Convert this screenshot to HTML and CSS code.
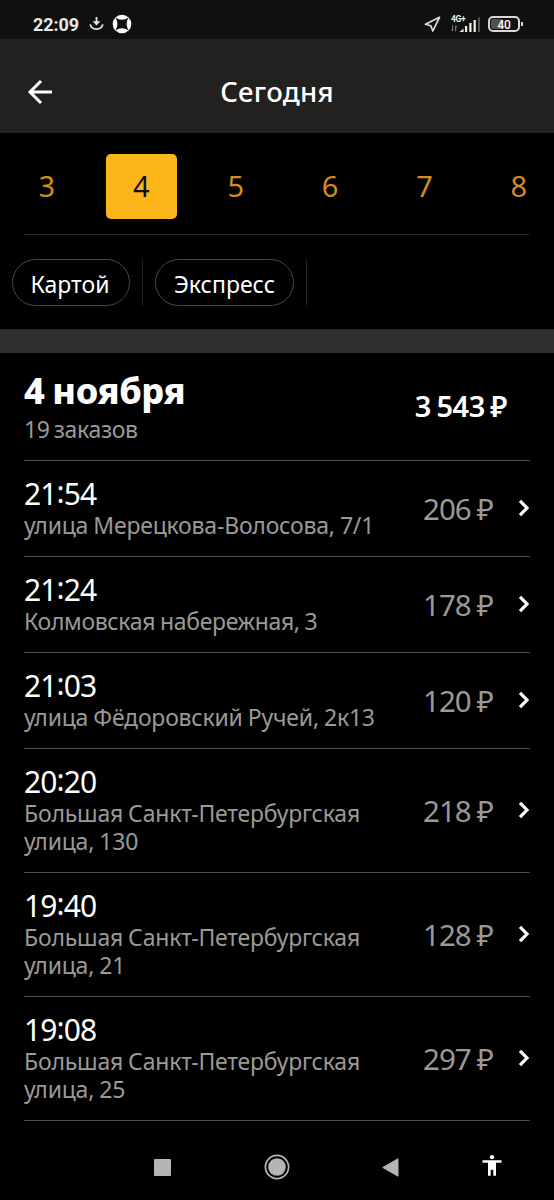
FILE: index.html
```html
<!DOCTYPE html>
<html lang="ru">
<head>
<meta charset="utf-8">
<meta name="viewport" content="width=device-width">
<title>Сегодня</title>
<link rel="stylesheet" href="styles.css">
</head>
<body>
<div class="status">
  <span class="clock">22:09</span>
  <svg class="download" width="16" height="16" viewBox="0 0 16 16" fill="none" stroke="#e4e4e2" stroke-width="1.800"><path d="M7.500 1v7"/><path d="M3.600 5.200h7.800L7.500 9.600z" fill="#e4e4e2" stroke="none"/><path d="M1.200 8.400c1.400 6.200 11.200 6.200 12.600 0"/></svg>
  <svg class="ball" width="20" height="20" viewBox="0 0 20 20"><circle cx="10" cy="10" r="9.300" fill="#fff"/><path d="M3.500 3.800Q10 7.600 16.500 3.800Q12.700 10 16.500 16.200Q10 12.400 3.500 16.200Q7.300 10 3.500 3.800z" fill="#10100f"/></svg>
  <svg class="nav-arrow" width="18" height="18" viewBox="0 0 18 18" fill="none" stroke="#e0e0de" stroke-width="1.700" stroke-linejoin="round"><path d="M15.500 2.300L1.500 9.300l5.300 1.500 2 5.200z"/></svg>
  <div class="cell">
    <svg width="30" height="18" viewBox="0 0 30 18"><path d="M1.700 10.500v5.500M.3 14.500L1.700 16M4.700 16.300v-5.500M4.700 10.800l1.400 1.500" stroke="#888" stroke-width="1" fill="none"/><path d="M8.500 17h4v-3.600zM14 17h2.200v-6H14zM18.300 17h2.200V8h-2.200zM22.600 17h2.200V5h-2.200z" fill="#f0f0ee"/><path d="M27 2.500h2V17h-2z" fill="#555"/></svg>
    <span class="net">4G+</span>
  </div>
  <div class="battery"><span>40</span></div>
</div>
<header class="header">
  <svg class="back" width="26" height="26" viewBox="0 0 26 26" fill="none" stroke="#fff" stroke-width="3"><path d="M25 13H3M14 2L3 13l11 11"/></svg>
  <h1>Сегодня</h1>
</header>
<nav class="days">
  <span>3</span><span class="active">4</span><span>5</span><span>6</span><span>7</span><span>8</span>
</nav>
<div class="filters">
  <span class="chip card">Картой</span><i></i><span class="chip express">Экспресс</span><i></i>
</div>
<div class="band"></div>
<main>
  <section class="summary">
    <div><h2>4 ноября</h2><p>19 заказов</p></div>
    <strong>3 543 ₽</strong>
  </section>
  <section class="order"><div class="info"><time>21<b>:</b>54</time><p>улица Мерецкова-Волосова, 7/1</p></div><span class="price">206 ₽</span><svg class="chev" viewBox="0 0 12 18"><path d="M2 1.800L9 9l-7 7.200"/></svg></section>
  <section class="order"><div class="info"><time>21<b>:</b>24</time><p class="tight">Колмовская набережная, 3</p></div><span class="price">178 ₽</span><svg class="chev" viewBox="0 0 12 18"><path d="M2 1.800L9 9l-7 7.200"/></svg></section>
  <section class="order"><div class="info"><time>21<b>:</b>03</time><p>улица Фёдоровский Ручей, 2к13</p></div><span class="price">120 ₽</span><svg class="chev" viewBox="0 0 12 18"><path d="M2 1.800L9 9l-7 7.200"/></svg></section>
  <section class="order"><div class="info"><time>20<b>:</b>20</time><p>Большая Санкт-Петербургская<br>улица, 130</p></div><span class="price">218 ₽</span><svg class="chev" viewBox="0 0 12 18"><path d="M2 1.800L9 9l-7 7.200"/></svg></section>
  <section class="order"><div class="info"><time>19<b>:</b>40</time><p>Большая Санкт-Петербургская<br>улица, 21</p></div><span class="price">128 ₽</span><svg class="chev" viewBox="0 0 12 18"><path d="M2 1.800L9 9l-7 7.200"/></svg></section>
  <section class="order"><div class="info"><time>19<b>:</b>08</time><p>Большая Санкт-Петербургская<br>улица, 25</p></div><span class="price">297 ₽</span><svg class="chev" viewBox="0 0 12 18"><path d="M2 1.800L9 9l-7 7.200"/></svg></section>
</main>
<footer class="system-nav">
  <svg width="17" height="17" viewBox="0 0 17 17"><rect width="17" height="17" rx="1" fill="#b5b5b5"/></svg>
  <svg width="26" height="26" viewBox="0 0 26 26"><circle cx="13" cy="13" r="11.600" fill="none" stroke="#b5b5b5" stroke-width="1.700"/><circle cx="13" cy="13" r="8.800" fill="#b5b5b5"/></svg>
  <svg width="17" height="19" viewBox="0 0 17 19"><path d="M16 .8v17.400L.8 9.500z" fill="#b5b5b5" stroke="#b5b5b5" stroke-linejoin="round"/></svg>
  <svg class="person" width="20" height="22" viewBox="0 0 20 22" fill="#fff"><circle cx="10" cy="2.200" r="2.100"/><path d="M.5 5.300h19v2.500H14v13h-2.700v-6H8.700v6H6v-13H.5z"/></svg>
</footer>
</body>
</html>
```
FILE: styles.css
```css
* { box-sizing: border-box; margin: 0; padding: 0; }
body { width: 554px; height: 1200px; background: #000; color: #fff; font-family: "Noto Sans", sans-serif; overflow: hidden; }
svg { display: block; flex: none; }
.status { height: 39px; background: #10100f; display: flex; align-items: center; padding: 9px 34px 0 33px; font-family: Roboto, sans-serif; }
.clock { font-size: 18px; font-weight: 700; color: #e8e8e6; width: 56px; letter-spacing: -.1px; }
.ball { margin-left: 7px; }
.nav-arrow { margin-left: auto; }
.cell { width: 30px; height: 18px; margin-left: 9px; position: relative; }
.net { position: absolute; left: 0; top: 0; font-size: 8.500px; line-height: 9px; font-weight: 700; color: #eee; letter-spacing: -.3px; }
.battery { width: 32px; height: 16px; margin-left: 7px; border: 2px solid #d8d8d6; border-radius: 5px; background: linear-gradient(90deg, #50504f 42%, transparent 42%) content-box; padding: 1px; display: flex; align-items: center; justify-content: center; position: relative; }
.battery::after { content: ""; position: absolute; right: -5px; top: 4px; width: 2px; height: 4px; background: #d8d8d6; }
.battery span { font-size: 12px; font-weight: 500; line-height: 12px; letter-spacing: -.3px; padding-top: 1px; }
.header { height: 94px; background: #222120; display: grid; grid-template-columns: 64px 1fr 64px; align-items: center; padding-top: 12px; }
.back { margin-left: 27px; }
.header h1 { font-size: 27.500px; line-height: 36px; font-weight: 550; text-align: center; letter-spacing: .3px; }
.days { height: 102px; margin: 0 24px; border-bottom: 1px solid #242424; padding-top: 21px; display: flex; gap: 23.400px; }
.days span { width: 71px; height: 65px; flex: none; border-radius: 5px; display: flex; align-items: center; justify-content: center; font-size: 29px; line-height: 36px; padding-bottom: 1px; color: #d28c20; }
.days span:first-child { margin-left: -12.600px; }
.days .active { background: #fcb61a; color: #100f0d; }
.filters { height: 94px; padding: 24px 12px 0; display: flex; }
.chip { height: 47px; border: 1px solid #484848; border-radius: 24px; font-size: 23px; line-height: 48px; text-align: center; }
.card { width: 118px; padding-right: 2px; }
.express { width: 139px; }
.filters i { width: 1px; height: 47px; margin: 0 12px; background: #242424; }
.band { height: 24px; background: #312f2e; }
main { padding: 0 24px; }
.summary { height: 108px; border-bottom: 1px solid #4c4c4c; display: flex; justify-content: space-between; padding-top: 17px; }
h2 { font-size: 36px; line-height: 42px; font-weight: 800; white-space: nowrap; letter-spacing: -.4px; word-spacing: -1px; }
p { color: #9b9997; font-size: 23px; line-height: 28px; white-space: nowrap; letter-spacing: -.2px; word-spacing: -.7px; }
.tight { letter-spacing: -.34px; }
.summary p { margin-top: 3px; letter-spacing: -.35px; word-spacing: -1.500px; }
.summary strong { font-size: 29px; line-height: 36px; font-weight: 600; margin: 18px 23px 0 0; letter-spacing: -.5px; word-spacing: -1.500px; }
.order { display: flex; align-items: center; border-bottom: 1px solid #4c4c4c; padding: 15px 0 16px; }
.info { flex: 1; }
time { display: block; font-size: 30px; line-height: 36px; letter-spacing: -.9px; }
time b { font-weight: 400; vertical-align: 2px; line-height: 1; }
.info p { margin-top: -1px; margin-bottom: 1px; }
.price { font-size: 29.500px; line-height: 36px; color: #9b9997; letter-spacing: -1px; word-spacing: -.5px; white-space: nowrap; padding-top: 2px; }
.chev { width: 12px; height: 18px; margin: 0 0 1px 25px; fill: none; stroke: #fff; stroke-width: 3.200; }
.system-nav { display: flex; gap: 94px; padding: 33px 0 0 154px; align-items: center; }
.system-nav svg:nth-child(2) { margin-left: -1px; }
.system-nav svg:nth-child(3) { margin-left: -2px; }
.system-nav .person { margin-left: -11px; margin-top: -3px; }
```
